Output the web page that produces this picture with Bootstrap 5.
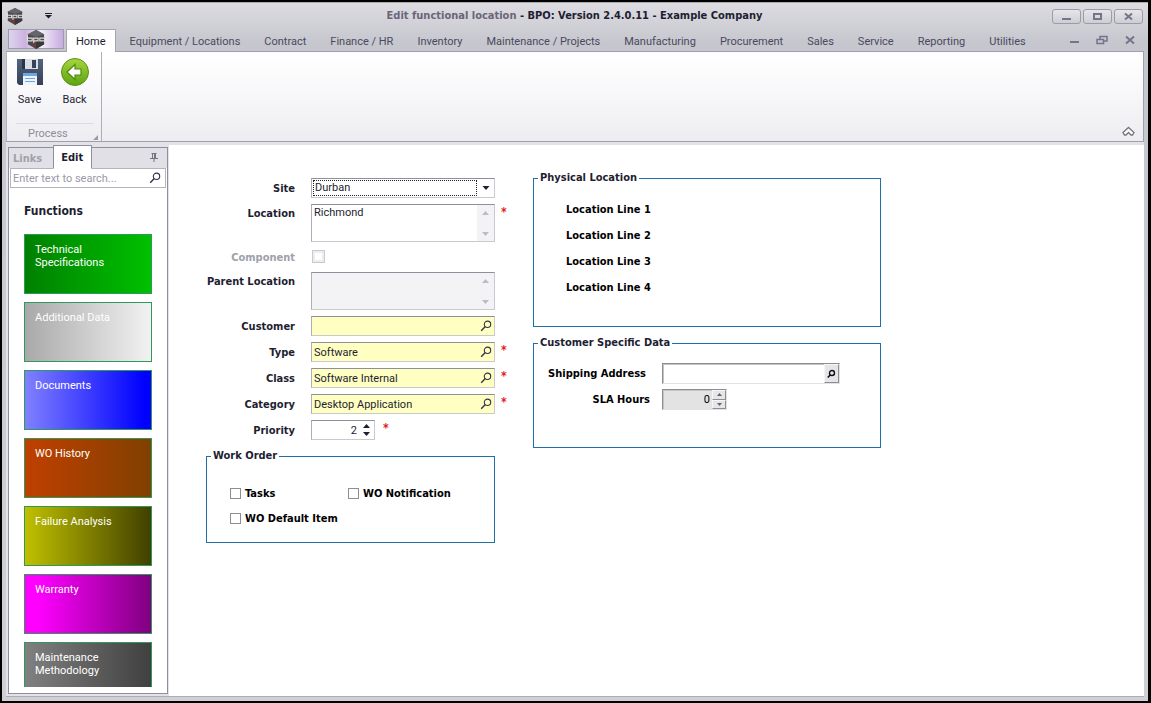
<!DOCTYPE html>
<html lang="en">
<head>
<meta charset="utf-8">
<meta name="viewport" content="width=device-width, initial-scale=1">
<title>Edit functional location - BPO</title>
<link rel="stylesheet" href="https://cdn.jsdelivr.net/npm/bootstrap@5.3.0/dist/css/bootstrap.min.css">
<style>
  :root { --ink: #1e1e32; --group: #1f6fa8; --strong: "DejaVu Sans Condensed", "DejaVu Sans", sans-serif; }
  body { font-family: Roboto, "Open Sans", sans-serif; font-size: 11px; line-height: 16px; color: var(--ink); background: #000; }
  button, input, select, textarea { font: inherit; color: inherit; border-radius: 0; }
  .frame { height: 100vh; padding: 2px 3px 2px 2px; }
  .shell { background: linear-gradient(#dcdce1, #c6c6ce 40px, #c6c6ce 60px, #cfcfd6); border-top: 1px solid #a9a9b0; min-height: 0; }
  .strong { font-family: var(--strong); font-weight: bold; }
  .titlebar { height: 26px; }
  .caption-side { flex: 1 1 0; }
  .caption-page { color: #6a6578; }
  .winbtns { gap: 2px; padding-right: 5px; }
  .winbtn { width: 29px; height: 15px; padding: 0; border: 1px solid #9c9ca8; border-radius: 3px; background: linear-gradient(#e6e6ea, #cdcdd4); }
  .plainbtn { padding: 0; border: 0; background: none; }
  .tabs-row { height: 22px; padding-left: 6px; padding-right: 12px; }
  .appbtn { width: 56px; height: 20px; padding: 0; flex: none; border: 1px solid #9c9cab; background: linear-gradient(90deg, #dcd5ee, #cdb2e0 30%, #f1eef8 60%, #c9a9e2); }
  .ribbon-tabs { height: 22px; }
  .ribbon-tabs a { color: #4a4a5c; text-decoration: none; padding: 5px 12px 0; white-space: nowrap; }
  .ribbon-tabs a.current { color: var(--ink); background: #fff; border: 1px solid #a6a6b2; border-bottom: 0; padding: 4px 9px 0 9px; margin: 0 2px; height: 23px; position: relative; z-index: 1; }
  .workspace { margin: 0 4px 4px 4px; border-bottom: 1px solid #aeaeb9; background: #e2e2e8; min-height: 0; }
  .ribbon { height: 91px; background: linear-gradient(#fff, #f8f8fa 45%, #ededf1); border: 1px solid #9fa0ab; border-left-color: #b4b4be; }
  .ribbon-group { width: 95px; border-right: 1px solid #aeaeb9; }
  .ribbon-cmd { width: 45px; padding: 0; border: 0; background: none; }
  .ribbon-name { border-top: 1px solid #dcdce2; color: #8d8d9a; margin: 0 7px 0 9px; height: 18px; padding: 2px 12px 0 12px; }
  .ribbon-name svg { margin-right: -16px; margin-top: 9px; }
  .lower { min-height: 0; }
  .side { width: 160px; margin: 5px 1px 2px 2px; border: 1px solid #8e8f9d; background: #fff; min-height: 0; }
  .side-tabs { height: 20px; background: #e0e0e6; }
  .side-tabs button { border: 0; background: none; padding: 2px 4px 0; height: 20px; color: #a0a0ac; }
  .side-tabs button.current { height: 24px; margin-top: -3px; margin-left: 7px; padding: 2px 8px 0 7px; border: 1px solid #8e8f9d; border-bottom-color: #fff; background: #fff; color: var(--ink); position: relative; z-index: 1; }
  .search { height: 20px; margin: 0 1px; border: 1px solid #b4b4be; }
  .bare { border: 0; outline: 0; background: none; padding: 0 2px; min-width: 0; width: 100%; resize: none; display: block; }
  input.bare { padding-top: 1px; }
  .bare::placeholder { color: #9a9aa8; opacity: 1; }
  .side h2 { font-size: 12px; font-family: var(--strong); font-weight: bold; line-height: 16px; margin: 15px 0 15px 15px; }
  .tiles { overflow: hidden; margin: 0 15px 6px 15px; min-height: 0; }
  .tile { flex: none; height: 60px; border: 1px solid #2e9a5a; color: #fff; text-align: left; padding: 8px 30px 0 10px; line-height: 13px; display: flex; align-items: flex-start; }
  .t-green { background: linear-gradient(90deg, #008000, #00c000); }
  .t-silver { background: linear-gradient(90deg, #a9a9a9, #f2f2f2); }
  .t-blue { background: linear-gradient(90deg, #8080ff, #0000ff 95%); }
  .t-rust { background: linear-gradient(90deg, #c04000, #804000); }
  .t-olive { background: linear-gradient(90deg, #c0c000, #404000); }
  .t-violet { background: linear-gradient(90deg, #ff00ff 10%, #800080); }
  .t-grey { background: linear-gradient(90deg, #808080, #404040); }
  .canvas { background: #fff; margin-top: 3px; padding: 25px 0 0 37px; min-width: 0; overflow: hidden; }
  .left-col { width: 327px; padding-top: 8px; }
  .right-col { width: 348px; }
  .stack { display: grid; gap: 6px; }
  .line { display: grid; grid-template-columns: 89px 184px 16px; column-gap: 16px; }
  .line > label { text-align: right; white-space: nowrap; padding-top: 3px; justify-self: end; }
  .line.two > label, .line.short > label { padding-top: 2px; }
  .line.short { height: 18px; }
  .line.short > label { color: #a0a0ac; }
  .line > .req { margin-left: -10px; }
  .req { font-family: var(--strong); color: #e02020; font-weight: bold; font-size: 12px; }
  .field { border: 1px solid #c9c9d0; border-top-color: #8e8f9d; border-left-color: #aeaeb9; background: #fff; height: 20px; }
  .field.tall { height: 38px; }
  .field.lookup { background: #ffffc1; padding-right: 2px; }
  .field.off { background: #f3f3f6; }
  .field.narrow { width: 64px; }
  .scroll { width: 17px; background: #f3f3f6; color: #bcbcc6; flex: none; padding: 6px 0 5px; }
  .site { appearance: none; flex: 1; border: 1px dotted #222; padding: 0 1px; margin: 1px; line-height: 14px; background: none; outline: 0; height: 16px; }
  .tick { appearance: none; flex: none; width: 11px; height: 11px; border: 1px solid #8e8e8e; background: #fff; margin: 0 4px 0 0; }
  .tick.dim { width: 13px; height: 13px; border-color: #c9c9d0; box-shadow: inset 0 0 0 2px #ededf1; margin: 2px 0 0 1px; }
  .groupbox { border: 1px solid var(--group); }
  .groupbox legend { float: none; width: auto; font-size: 11px; line-height: 16px; margin: 0 0 0 4px; padding: 0 2px; }
  .work { width: 289px; height: 95px; margin-top: 8px; }
  .checks { padding: 17px 0 0 23px; display: grid; grid-template-columns: 118px 1fr; grid-auto-rows: 25px; color: #000; }
  .checks .wide { grid-column: 1 / 3; }
  .physical { height: 157px; }
  .physical ul { padding: 11px 0 0 32px; line-height: 26px; color: #000; }
  .specific { height: 113px; margin-top: 8px; }
  .specific .pair { display: grid; grid-template-columns: 116px 178px; column-gap: 12px; row-gap: 5px; padding-top: 12px; color: #000; }
  .specific label { text-align: right; padding-top: 3px; }
  .sunk { height: 21px; border: 1px solid #e2e2e2; border-top-color: #8e8e8e; border-left-color: #8e8e8e; box-shadow: inset 1px 1px #c4c4c4; background: #fff; }
  .sunk.off { width: 65px; background: #e3e3e3; }
  .raised { border: 1px solid #f6f6f6; border-right-color: #8e8e8e; border-bottom-color: #8e8e8e; background: #e6e6ea; padding: 0; display: flex; align-items: center; justify-content: center; }
  .find-btn { width: 16px; }
  .spin { width: 14px; color: #666; }
  .num { appearance: textfield; text-align: right; }
  .num::-webkit-inner-spin-button { display: none; }
  svg { display: block; flex: none; }
</style>
</head>
<body>
<svg width="0" height="0" class="position-absolute" aria-hidden="true">
  <defs>
    <symbol id="glass" viewBox="0 0 12 12"><circle cx="7.500" cy="4.300" r="3.200" fill="none" stroke="#33334a" stroke-width="1.100"/><path d="M5.300 6.600 1.200 10.800" stroke="#33334a" stroke-width="1.400"/></symbol>
    <symbol id="hex" viewBox="0 0 20 20"><path d="M10 0 18.500 4.500V15L10 20 1.500 15V4.500Z" fill="#4a4a4c"/><path d="M10 0 18.500 4.500 10 7 1.500 4.500Z" fill="#66666a"/><path d="M10 20 18.500 15V11H10Z" fill="#39393b"/><path d="M1 6V11.500H6V8.500H1.500M7.600 14V8.500H12.200V11.500H8M14 8.500H19V11.500H14Z" fill="none" stroke="#dedede" stroke-width="1.200"/><path d="M6.500 14.500 9.500 17.500V13.500Z" fill="#b02020"/></symbol>
    <symbol id="up" viewBox="0 0 7 4"><path d="M0 4 3.500 0 7 4Z" fill="currentColor"/></symbol>
    <symbol id="down" viewBox="0 0 7 4"><path d="M0 0 3.500 4 7 0Z" fill="currentColor"/></symbol>
  </defs>
</svg>

<div class="frame d-flex flex-column">
 <div class="shell flex-fill d-flex flex-column">
  <header class="titlebar d-flex flex-shrink-0 align-items-center">
    <div class="caption-side d-flex align-items-center ps-1">
      <svg width="18" height="17"><use href="#hex"/></svg>
      <button class="plainbtn ms-3" type="button" aria-label="Customize quick access"><svg class="ms-1" width="9" height="6" viewBox="0 0 9 6"><path d="M1 .5H8" stroke="#1e1e32"/><path d="M1 2H8L4.500 5.500Z" fill="#1e1e32"/></svg></button>
    </div>
    <div class="strong"><span class="caption-page">Edit functional location</span> - BPO: Version 2.4.0.11 - Example Company</div>
    <div class="caption-side winbtns d-flex justify-content-end">
      <button class="winbtn" type="button" aria-label="Minimize"><svg class="mx-auto" width="11" height="9" viewBox="0 0 11 9"><path d="M1 7H10" stroke="#74748a" stroke-width="2"/></svg></button>
      <button class="winbtn" type="button" aria-label="Maximize"><svg class="mx-auto" width="9" height="9" viewBox="0 0 9 9"><rect x="1" y="2" width="7" height="5" fill="none" stroke="#74748a" stroke-width="2"/></svg></button>
      <button class="winbtn" type="button" aria-label="Close"><svg class="mx-auto" width="9" height="9" viewBox="0 0 9 9"><path d="M1 1.500 8 7.500M8 1.500 1 7.500" stroke="#74748a" stroke-width="2"/></svg></button>
    </div>
  </header>

  <div class="tabs-row d-flex flex-shrink-0 align-items-start">
    <button class="appbtn" type="button" aria-label="Application menu"><svg class="mx-auto" width="20" height="19"><use href="#hex"/></svg></button>
    <nav class="ribbon-tabs d-flex flex-fill" aria-label="Ribbon">
      <a class="current" href="#" aria-current="page">Home</a><a href="#">Equipment / Locations</a><a href="#">Contract</a><a href="#">Finance / HR</a><a href="#">Inventory</a><a href="#">Maintenance / Projects</a><a href="#">Manufacturing</a><a href="#">Procurement</a><a href="#">Sales</a><a href="#">Service</a><a href="#">Reporting</a><a href="#">Utilities</a>
    </nav>
    <div class="d-flex align-self-center gap-3">
      <button class="plainbtn" type="button" aria-label="Minimize document"><svg width="12" height="10" viewBox="0 0 12 10"><path d="M2 7H11" stroke="#74748a" stroke-width="2"/></svg></button>
      <button class="plainbtn" type="button" aria-label="Restore document"><svg width="12" height="10" viewBox="0 0 12 10"><path d="M4 5V1.500H11V6H8" fill="none" stroke="#74748a" stroke-width="1.500"/><rect x="1" y="4.500" width="6.500" height="4" fill="none" stroke="#74748a" stroke-width="1.500"/></svg></button>
      <button class="plainbtn" type="button" aria-label="Close document"><svg width="12" height="10" viewBox="0 0 12 10"><path d="M2 1.500 10 8.500M10 1.500 2 8.500" stroke="#74748a" stroke-width="2"/></svg></button>
    </div>
  </div>

  <div class="workspace flex-fill d-flex flex-column">
    <section class="ribbon flex-shrink-0 d-flex justify-content-between">
      <div class="ribbon-group d-flex flex-column justify-content-between">
        <div class="d-flex">
          <button class="ribbon-cmd" type="button">
            <svg class="mx-auto mt-1 mb-1" width="32" height="32" viewBox="0 0 32 32"><defs><linearGradient id="disk" x2="0" y2="1"><stop stop-color="#55647c"/><stop offset="1" stop-color="#33405a"/></linearGradient></defs><path d="M3 3H29V29H5L3 27Z" fill="url(#disk)"/><rect x="8" y="3" width="16" height="10" fill="#d9dde4"/><rect x="8" y="3" width="3" height="10" fill="#2a3548"/><rect x="18" y="4" width="4" height="8" fill="#35425a"/><rect x="9" y="17" width="14" height="12" fill="#eef4fb"/><rect x="9" y="17" width="14" height="3" fill="#6fa8e0"/><path d="M11 22.500H21M11 25.500H21" stroke="#6fa8e0"/></svg>Save</button>
          <button class="ribbon-cmd" type="button">
            <svg class="mx-auto mt-1 mb-1" width="32" height="32" viewBox="0 0 32 32"><defs><linearGradient id="lime" x2="0" y2="1"><stop stop-color="#a6d63c"/><stop offset="1" stop-color="#5ea312"/></linearGradient></defs><circle cx="16" cy="16" r="13.500" fill="url(#lime)" stroke="#5a8f1c"/><path d="M8 16 16 8.500V13H22V19H16V23.500Z" fill="#fff" stroke="#4f8a14" stroke-width="1.200"/></svg>Back</button>
        </div>
        <div class="ribbon-name d-flex justify-content-between">Process<svg width="5" height="5" viewBox="0 0 5 5"><path d="M5 0V5H0Z" fill="#9a9aa8"/></svg></div>
      </div>
      <button class="plainbtn align-self-end me-2 mb-1" type="button" aria-label="Collapse ribbon"><svg width="13" height="11" viewBox="0 0 13 11"><path d="M1 6.500 6.500 1.500 12 6.500 10.500 9H9L6.500 6.500 4 9H2.500Z" fill="#fff" stroke="#74747f" stroke-width="1.300"/></svg></button>
    </section>

    <div class="lower d-flex flex-fill">
      <aside class="side d-flex flex-column flex-shrink-0">
        <div class="side-tabs d-flex flex-shrink-0">
          <button class="strong" type="button">Links</button><button class="strong current" type="button">Edit</button>
          <svg class="ms-auto me-2 mt-1" width="10" height="11" viewBox="0 0 10 11"><path d="M2.500 1.500H7.500M3.500 1.500V6M6.500 1.500V6M1 6.500H9M5 6.500V10" stroke="#74747f" fill="none"/><path d="M5 2H7V6H5Z" fill="#74747f"/></svg>
        </div>
        <div class="search d-flex align-items-center flex-shrink-0 pe-1">
          <input class="bare" type="text" aria-label="Search functions" placeholder="Enter text to search...">
          <svg width="12" height="12"><use href="#glass"/></svg>
        </div>
        <h2>Functions</h2>
        <div class="tiles d-flex flex-column gap-2 flex-fill">
          <button class="tile t-green" type="button">Technical Specifications</button>
          <button class="tile t-silver" type="button">Additional Data</button>
          <button class="tile t-blue" type="button">Documents</button>
          <button class="tile t-rust" type="button">WO History</button>
          <button class="tile t-olive" type="button">Failure Analysis</button>
          <button class="tile t-violet" type="button">Warranty</button>
          <button class="tile t-grey" type="button">Maintenance Methodology</button>
        </div>
      </aside>

      <main class="canvas flex-fill d-flex align-items-start">
        <form class="left-col flex-shrink-0">
          <div class="stack">
            <div class="line"><label class="strong" for="site">Site</label>
              <div class="field d-flex align-items-center"><select class="site" id="site"><option>Durban</option></select><svg class="mx-1" width="8" height="4"><use href="#down"/></svg></div></div>
            <div class="line two"><label class="strong" for="loc">Location</label>
              <div class="field tall d-flex"><textarea class="bare" id="loc">Richmond</textarea><div class="scroll d-flex flex-column justify-content-between align-items-center"><svg width="7" height="4"><use href="#up"/></svg><svg width="7" height="4"><use href="#down"/></svg></div></div><span class="req">*</span></div>
            <div class="line short"><label class="strong" for="comp">Component</label><input class="tick dim" id="comp" type="checkbox" disabled></div>
            <div class="line two"><label class="strong" for="parent">Parent Location</label>
              <div class="field tall off d-flex"><textarea class="bare" id="parent" disabled></textarea><div class="scroll d-flex flex-column justify-content-between align-items-center"><svg width="7" height="4"><use href="#up"/></svg><svg width="7" height="4"><use href="#down"/></svg></div></div></div>
            <div class="line"><label class="strong" for="cust">Customer</label>
              <div class="field lookup d-flex align-items-center"><input class="bare" id="cust" type="text"><svg width="12" height="12"><use href="#glass"/></svg></div></div>
            <div class="line"><label class="strong" for="type">Type</label>
              <div class="field lookup d-flex align-items-center"><input class="bare" id="type" type="text" value="Software"><svg width="12" height="12"><use href="#glass"/></svg></div><span class="req">*</span></div>
            <div class="line"><label class="strong" for="class">Class</label>
              <div class="field lookup d-flex align-items-center"><input class="bare" id="class" type="text" value="Software Internal"><svg width="12" height="12"><use href="#glass"/></svg></div><span class="req">*</span></div>
            <div class="line"><label class="strong" for="cat">Category</label>
              <div class="field lookup d-flex align-items-center"><input class="bare" id="cat" type="text" value="Desktop Application"><svg width="12" height="12"><use href="#glass"/></svg></div><span class="req">*</span></div>
            <div class="line"><label class="strong" for="prio">Priority</label>
              <div class="d-flex"><div class="field narrow d-flex align-items-center pe-1"><input class="bare num" id="prio" type="number" value="2"><div class="d-flex flex-column gap-1 ms-1"><svg width="7" height="4"><use href="#up"/></svg><svg width="7" height="4"><use href="#down"/></svg></div></div><span class="req ms-2">*</span></div></div>
          </div>
          <fieldset class="groupbox work">
            <legend class="strong">Work Order</legend>
            <div class="checks strong">
              <label class="d-flex align-items-center"><input class="tick" type="checkbox">Tasks</label>
              <label class="d-flex align-items-center"><input class="tick" type="checkbox">WO Notification</label>
              <label class="d-flex align-items-center wide"><input class="tick" type="checkbox">WO Default Item</label>
            </div>
          </fieldset>
        </form>

        <div class="right-col">
          <fieldset class="groupbox physical">
            <legend class="strong">Physical Location</legend>
            <ul class="list-unstyled strong mb-0"><li>Location Line 1</li><li>Location Line 2</li><li>Location Line 3</li><li>Location Line 4</li></ul>
          </fieldset>
          <fieldset class="groupbox specific">
            <legend class="strong">Customer Specific Data</legend>
            <div class="pair">
              <label class="strong pe-1" for="ship">Shipping Address</label>
              <div class="sunk d-flex"><input class="bare" id="ship" type="text"><button class="raised find-btn" type="button" aria-label="Find address"><svg width="9" height="10" viewBox="0 0 9 10"><circle cx="5" cy="4" r="2.500" fill="none" stroke="#111" stroke-width="1.400"/><path d="M3.200 6 .8 8.500" stroke="#111" stroke-width="1.600"/></svg></button></div>
              <label class="strong" for="sla">SLA Hours</label>
              <div class="sunk off d-flex"><input class="bare num" id="sla" type="number" value="0"><div class="spin d-flex flex-column flex-shrink-0"><div class="raised flex-fill"><svg width="5" height="3"><use href="#up"/></svg></div><div class="raised flex-fill"><svg width="5" height="3"><use href="#down"/></svg></div></div></div>
            </div>
          </fieldset>
        </div>
      </main>
    </div>
  </div>
 </div>
</div>
<script src="https://cdn.jsdelivr.net/npm/bootstrap@5.3.0/dist/js/bootstrap.bundle.min.js"></script>
</body>
</html>
